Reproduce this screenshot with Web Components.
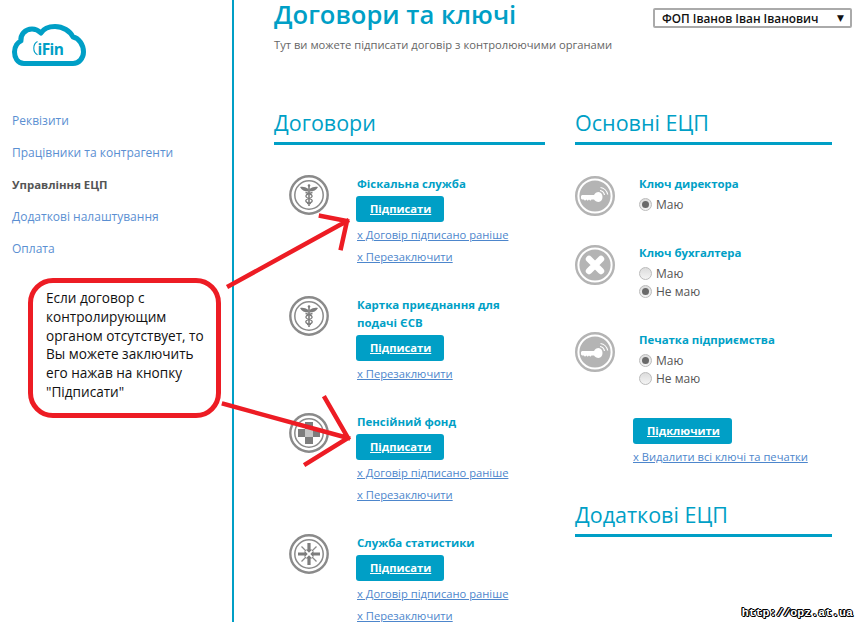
<!DOCTYPE html>
<html lang="uk">
<head>
<meta charset="utf-8">
<title>Договори та ключі</title>
<style>
  html, body { margin: 0; padding: 0; height: 622px; overflow: hidden; background: #fff; }
  body { font-family: "Open Sans", "Liberation Sans", sans-serif; }
</style>
</head>
<body>
<ifin-app></ifin-app>

<script>
(function () {
  const TEAL = "#009fc6";

  function define(name, css, html, setup) {
    customElements.define(name, class extends HTMLElement {
      connectedCallback() {
        if (this.shadowRoot) return;
        const root = this.attachShadow({ mode: "open" });
        const attrs = {};
        for (const a of this.attributes) attrs[a.name] = a.value;
        root.innerHTML = "<style>" + css + "</style>" + (typeof html === "function" ? html(attrs) : html);
        if (setup) setup(root, attrs);
      }
    });
  }

  // --- icons ---
  const ICONS = {
    caduceus: `
      <circle cx="20" cy="20" r="18.7" fill="none" stroke="#8a8a8a" stroke-width="2.4"/>
      <circle cx="20" cy="20" r="14.2" fill="none" stroke="#8a8a8a" stroke-width="1.5"/>
      <circle cx="20" cy="10.5" r="1.3" fill="#7d7d7d"/>
      <path d="M20 10.5V31" stroke="#7d7d7d" stroke-width="1.6"/>
      <path d="M19.5 14C16.5 11.8 13.5 11.4 11 12C12.5 15 15.5 16.6 19.5 16.6zM20.5 14C23.5 11.8 26.5 11.4 29 12C27.5 15 24.5 16.6 20.5 16.6z" fill="#7d7d7d"/>
      <path d="M23.5 17.5C16 19 15 22 20 23.5C25 25 24 27.5 18 28.5M16.5 17.5C24 19 25 22 20 23.5C15 25 16 27.5 22 28.5" fill="none" stroke="#7d7d7d" stroke-width="1.3"/>`,
    cross: `
      <circle cx="20" cy="20" r="18.7" fill="none" stroke="#8a8a8a" stroke-width="2.4"/>
      <circle cx="20" cy="20" r="14.2" fill="none" stroke="#8a8a8a" stroke-width="1.5"/>
      <path d="M16 9h8v7h-8zM9 16h7v8H9zM24 16h7v8h-7zM16 24h8v7h-8z" fill="#7d7d7d"/>
      <path d="M16 16h8v8h-8z" fill="#c4c4c4"/>`,
    stat: `
      <circle cx="20" cy="20" r="18.7" fill="none" stroke="#8a8a8a" stroke-width="2.4"/>
      <circle cx="20" cy="20" r="14.2" fill="none" stroke="#8a8a8a" stroke-width="1.5"/>
      <g fill="#7d7d7d">
        <path d="M18.4 9h3.2v6.5l1.6 0L20 18.7l-3.2-3.2h1.6z"/>
        <path d="M18.4 31h3.2v-6.5l1.6 0L20 21.3l-3.2 3.2h1.6z"/>
        <path d="M9 18.4v3.2h6.5v1.6l3.2-3.2-3.2-3.2v1.6z"/>
        <path d="M31 18.4v3.2h-6.5v1.6l-3.2-3.2 3.2-3.2v1.6z"/>
      </g>
      <path d="M12.5 12.5L17 17M27.5 12.5L23 17M12.5 27.5L17 23M27.5 27.5L23 23" stroke="#8a8a8a" stroke-width="1.3"/>`,
    key: `
      <circle cx="20" cy="20" r="18.8" fill="none" stroke="#b4b4b4" stroke-width="2.4"/>
      <circle cx="20" cy="20" r="15.6" fill="#b4b4b4"/>
      <path d="M7 19H19C20 17 21.5 16 23.5 16C26 16 27.5 18.2 27.5 21C27.5 23.8 26 26 23.5 26C21.5 26 20 25 19 23.5H16.5L15.3 24.7L14 23.5L12.7 24.7L11.4 23.5L10 24.7L8.8 23.5H7L6 22.5V20z" fill="#fff"/>
      <path d="M25 14.5C27.2 14.8 29 16.6 29.5 19M25.5 11.5C29 12 32 15 32.7 18.5" fill="none" stroke="#fff" stroke-width="1.2"/>`,
    none: `
      <circle cx="20" cy="20" r="18.8" fill="none" stroke="#b4b4b4" stroke-width="2.4"/>
      <circle cx="20" cy="20" r="15.6" fill="#b4b4b4"/>
      <path d="M14 14L26 26M26 14L14 26" stroke="#fff" stroke-width="6.4" stroke-linecap="round"/>`
  };

  define("round-icon",
    `:host { display: block; width: 40px; height: 40px; flex: none; }
     svg { display: block; }`,
    a => `<svg width="40" height="40" viewBox="0 0 40 40">${ICONS[a.type] || ""}</svg>`);

  define("ifin-logo",
    `:host { display: block; width: 74px; height: 42px; }
     svg { display: block; overflow: visible; }
     text { font: 700 15.5px "Open Sans", "Liberation Sans", sans-serif; fill: ${TEAL}; letter-spacing: -.6px; }`,
    `<svg width="74" height="42" viewBox="12 24 74 42">
       <path d="M24 63.5C17 63.5 14.5 57 14.5 52C14.5 46 18 42 21 41C20 35 25 29 32 29C36 29 39 31 41 33C44 28 50 26.5 55 26.5C63 26.5 70 31 73 37C79 38 83.5 45 83.5 52C83.5 58 79 63.5 73 63.5Z" fill="#fff" stroke="${TEAL}" stroke-width="5" stroke-linejoin="round"/>
       <path d="M37.5 41.5C35 42.8 33.8 45.5 33.8 48.2C33.8 51 35 53.5 37.5 54.8" fill="none" stroke="${TEAL}" stroke-width="1.1"/>
       <text x="37.5" y="54.5">iFin</text>
     </svg>`);

  // --- small parts ---
  define("nav-link",
    `:host { display: block; height: 32px; line-height: 32px; font-size: 12px; color: #5a8fd2; white-space: nowrap; }
     :host([current]) { color: #555; font-weight: 700; font-size: 11.4px; }`,
    `<slot></slot>`);

  define("action-button",
    `:host { display: inline-block; box-sizing: border-box; height: 26px; line-height: 25px; padding: 0 14px; min-width: 88px;
             text-align: center; background: ${TEAL}; border-radius: 3px; color: #fff; font-size: 11.2px; font-weight: 700; text-decoration: underline; }`,
    `<slot></slot>`);

  define("text-link",
    `:host { display: block; height: 22px; line-height: 22px; font-size: 11.2px; color: #4d86cc; text-decoration: underline; white-space: nowrap; }`,
    `<slot></slot>`);

  define("section-title",
    `:host { display: block; height: 34px; line-height: 30px; font-size: 21.5px; color: ${TEAL};
             border-bottom: 3px solid ${TEAL}; white-space: nowrap; }`,
    `<slot></slot>`);

  define("radio-row",
    `:host { display: flex; align-items: center; height: 18px; font-size: 12px; color: #555; }
     .dot { box-sizing: border-box; width: 13px; height: 13px; margin-right: 4px; border-radius: 50%; border: 1px solid #bbb;
            background: linear-gradient(#dcdcdc, #f4f4f4); display: flex; align-items: center; justify-content: center; }
     .dot i { display: block; width: 7px; height: 7px; border-radius: 50%; background: #6a6a6a; }`,
    a => `<span class="dot">${"checked" in a ? "<i></i>" : ""}</span><slot></slot>`);

  define("company-select",
    `:host { display: flex; align-items: center; box-sizing: border-box; width: 199px; height: 20px; margin-top: 8px; padding: 0 6px 0 7px;
             border: 2px solid #aaa; border-radius: 2px; font-size: 11.8px; font-weight: 600; color: #111; white-space: nowrap; }
     span { flex: 1; }
     b { font-size: 9px; line-height: 1; font-family: "DejaVu Sans", sans-serif; }`,
    `<span><slot></slot></span><b>▼</b>`);

  // --- rows ---
  define("contract-item",
    `:host { display: flex; padding-left: 15px; margin-bottom: 27px; }
     .body { margin-left: 27px; flex: 1; }
     .name { max-width: 150px; margin: 0 0 3px 1px; padding-top: 1px; font-size: 11.45px; line-height: 18px; font-weight: 700; color: ${TEAL}; }
     round-icon { margin-top: 1px; }
     ::slotted(action-button) { margin-bottom: 2px; display: block; width: 88px; }
     ::slotted(text-link) { margin-left: 1px; }`,
    a => `<round-icon type="${a.icon}"></round-icon>
          <div class="body"><div class="name">${a.name}</div><slot></slot></div>`);

  define("key-item",
    `:host { display: flex; margin-bottom: 31px; }
     .body { margin-left: 24px; flex: 1; }
     .name { margin-bottom: 2px; font-size: 11.4px; line-height: 18px; font-weight: 700; color: ${TEAL}; }
     round-icon { margin: 1px 0 -3px; }`,
    a => `<round-icon type="${a.icon}"></round-icon>
          <div class="body"><div class="name">${a.name}</div><slot></slot></div>`);

  // --- sheet with callout and arrows, drawn over the page ---
  define("help-callout",
    `:host { position: absolute; left: 28px; top: 278px; width: 193px; height: 140px; box-sizing: border-box; padding: 6px 10px 0 13px;
             border: 5px solid #ed1c24; border-radius: 25px; background: #fff; color: #111; font-size: 13.6px; line-height: 18.8px; }`,
    `<slot></slot>`);

  define("help-arrows",
    `:host { position: absolute; left: 0; top: 0; width: 857px; height: 622px; pointer-events: none; }
     svg { display: block; }`,
    `<svg width="857" height="622" fill="none" stroke="#ed1c24" stroke-width="4.5" stroke-linecap="square">
       <path d="M229 286L347 221M321 216L347 221L341 248"/>
       <path d="M224 404L348 438M325 398L348 438L306 464"/>
     </svg>`);

  define("site-stamp",
    `:host { position: absolute; right: 4px; bottom: 3px; font: 700 11.6px "Liberation Mono", monospace; color: #fff;
             text-shadow: -1px 0 #000, 1px 0 #000, 0 -1px #000, 0 1px #000, 1px 1px #000, -1px -1px #000; }`,
    `<slot></slot>`);

  // --- layout ---
  define("side-bar",
    `:host { display: block; width: 220px; height: 622px; padding-left: 12px; border-right: 2px solid ${TEAL}; flex: none; }
     .logo { padding-top: 24px; margin-bottom: 39px; }`,
    `<div class="logo"><ifin-logo></ifin-logo></div><slot></slot>`);

  define("page-head",
    `:host { display: flex; justify-content: space-between; height: 108px; }
     h1 { margin: 0; font-size: 25.6px; line-height: 29px; font-weight: 600; color: ${TEAL}; white-space: nowrap; }
     p { margin: 7px 0 0; font-size: 11.2px; line-height: 18px; color: #666; white-space: nowrap; }`,
    a => `<div><h1>${a.heading}</h1><p>${a.text}</p></div><slot></slot>`);

  define("ifin-app",
    `:host { display: flex; position: relative; width: 857px; height: 622px; overflow: hidden; }
     main { flex: 1; padding: 0 5px 0 40px; }
     .cols { display: grid; grid-template-columns: 271px 257px; column-gap: 30px; }
     .list { padding-top: 29px; }
     .keys { padding-top: 30px; }
     .after { margin-left: 58px; }
     .after action-button { display: block; width: 99px; margin-bottom: 2px; }
     .gap { height: 32px; }`,
    `<side-bar>
       <nav-link>Реквізити</nav-link>
       <nav-link>Працівники та контрагенти</nav-link>
       <nav-link current>Управління ЕЦП</nav-link>
       <nav-link>Додаткові налаштування</nav-link>
       <nav-link>Оплата</nav-link>
     </side-bar>
     <main>
       <page-head heading="Договори та ключі" text="Тут ви можете підписати договір з контролюючими органами">
         <company-select>ФОП Іванов Іван Іванович</company-select>
       </page-head>
       <div class="cols">
         <section>
           <section-title>Договори</section-title>
           <div class="list">
             <contract-item icon="caduceus" name="Фіскальна служба">
               <action-button>Підписати</action-button>
               <text-link>х Договір підписано раніше</text-link>
               <text-link>х Перезаключити</text-link>
             </contract-item>
             <contract-item icon="caduceus" name="Картка приєднання для подачі ЄСВ">
               <action-button>Підписати</action-button>
               <text-link>х Перезаключити</text-link>
             </contract-item>
             <contract-item icon="cross" name="Пенсійний фонд">
               <action-button>Підписати</action-button>
               <text-link>х Договір підписано раніше</text-link>
               <text-link>х Перезаключити</text-link>
             </contract-item>
             <contract-item icon="stat" name="Служба статистики">
               <action-button>Підписати</action-button>
               <text-link>х Договір підписано раніше</text-link>
               <text-link>х Перезаключити</text-link>
             </contract-item>
           </div>
         </section>
         <section>
           <section-title>Основні ЕЦП</section-title>
           <div class="keys">
             <key-item icon="key" name="Ключ директора">
               <radio-row checked>Маю</radio-row>
             </key-item>
             <key-item icon="none" name="Ключ бухгалтера">
               <radio-row>Маю</radio-row>
               <radio-row checked>Не маю</radio-row>
             </key-item>
             <key-item icon="key" name="Печатка підприємства">
               <radio-row checked>Маю</radio-row>
               <radio-row>Не маю</radio-row>
             </key-item>
           </div>
           <div class="after">
             <action-button>Підключити</action-button>
             <text-link>х Видалити всі ключі та печатки</text-link>
           </div>
           <div class="gap"></div>
           <section-title>Додаткові ЕЦП</section-title>
         </section>
       </div>
     </main>
     <help-arrows></help-arrows>
     <help-callout>Если договор с контролирующим органом отсутствует, то Вы можете заключить его нажав на кнопку "Підписати"</help-callout>
     <site-stamp>http://opz.at.ua</site-stamp>`);
})();
</script>
</body>
</html>
